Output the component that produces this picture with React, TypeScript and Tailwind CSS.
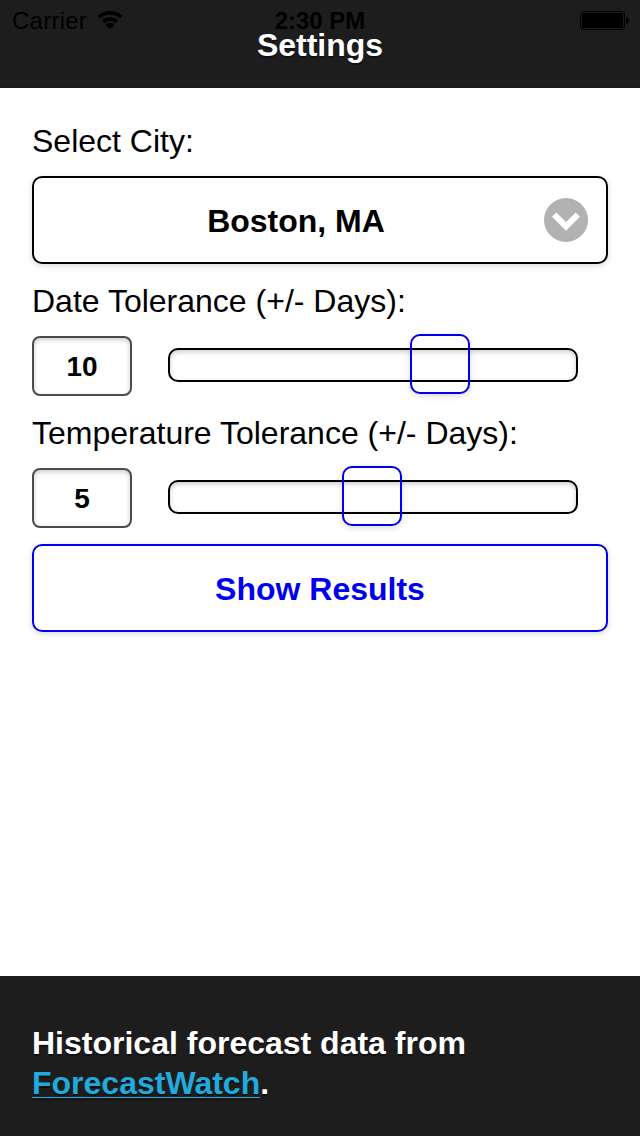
import React from "react";

function StatusBar() {
  return (
    <div className="absolute inset-x-0 top-0 flex h-10 justify-between text-[24px] leading-[40px] text-black">
      <div className="flex w-[213px] pl-3">
        <span className="pt-px tracking-[0.25px]">Carrier</span>
        <svg className="ml-[10px] mt-[10px]" width="26" height="20" viewBox="0 0 26 20">
          <g fill="none" stroke="#000" strokeWidth="3.6">
            <path d="M1.8 7.3A16 16 0 0 1 24.2 7.3" />
            <path d="M6.2 11.9A9.7 9.7 0 0 1 19.8 11.9" />
          </g>
          <path d="M13 19.3L8.4 14.8A6.4 6.4 0 0 1 17.6 14.8Z" />
        </svg>
      </div>
      <div className="w-[213px] pt-px text-center font-bold">2:30 PM</div>
      <div className="flex w-[213px] justify-end pr-[11px] pt-[11px]">
        <svg width="49" height="19" viewBox="0 0 49 19">
          <rect x="0.5" y="0.5" width="44" height="18" rx="3" fill="none" stroke="#000" />
          <rect x="2" y="2" width="41" height="15" rx="1.5" />
          <path d="M46 6c4 1 4 6 0 7Z" />
        </svg>
      </div>
    </div>
  );
}

function ToleranceRow({ value, offset }: { value: number; offset: number }) {
  return (
    <div className="flex h-[60px] items-start">
      <input
        readOnly
        value={value}
        className="h-[60px] w-[100px] rounded-[8px] border-2 border-[#4b4b4b] bg-white pt-[2px] text-center text-[28px] font-bold text-black shadow-[inset_0_2px_5px_rgba(0,0,0,0.2)] outline-none"
      />
      <div className="relative ml-9 mt-3 h-[34px] w-[410px] rounded-[10px] border-2 border-black shadow-[inset_0_2px_5px_rgba(0,0,0,0.2)]">
        <div
          className="absolute top-[-16px] h-[60px] w-[60px] rounded-[10px] border-2 border-[#0000ee] shadow-[0_2px_6px_rgba(0,0,0,0.15)]"
          style={{ left: offset }}
        />
      </div>
    </div>
  );
}

export default function App() {
  return (
    <div className="flex h-[1136px] w-[640px] flex-col bg-white font-['Liberation_Sans',Arial,sans-serif] text-[32px] leading-[40px] text-black">
      <header className="relative h-[88px] border-b-2 border-[#1b1b1b] bg-[#1d1d1d] pt-[25px]">
        <StatusBar />
        <h1 className="relative text-center font-bold text-white [text-shadow:0_2px_0_#111]">Settings</h1>
      </header>
      <main className="flex flex-1 flex-col px-8 pt-[33px]">
        <p>Select City:</p>
        <button className="mt-[15px] flex h-[88px] items-center rounded-[10px] border-2 border-black pl-[14px] pr-[18px] shadow-[0_2px_6px_rgba(0,0,0,0.15)]">
          <span className="flex-1 pt-[2px] text-center font-bold">Boston, MA</span>
          <svg width="44" height="44" viewBox="0 0 44 44">
            <circle cx="22" cy="22" r="22" fill="#b2b2b2" />
            <path d="M10.2 16.6L22 28.4L33.8 16.6" fill="none" stroke="#fff" strokeWidth="6.2" />
          </svg>
        </button>
        <p className="mt-[17px]">Date Tolerance (+/- Days):</p>
        <div className="mt-[15px]">
          <ToleranceRow value={10} offset={240} />
        </div>
        <p className="mt-[17px]">Temperature Tolerance (+/- Days):</p>
        <div className="mt-[15px]">
          <ToleranceRow value={5} offset={172} />
        </div>
        <button className="mt-4 h-[88px] rounded-[10px] border-2 border-[#0000ee] pt-[2px] font-bold text-[#0000ee] shadow-[0_2px_6px_rgba(0,0,0,0.15)]">
          Show Results
        </button>
      </main>
      <footer className="h-[160px] bg-[#1d1d1d] px-8 pt-[47px] font-bold text-white [text-shadow:0_2px_0_#111]">
        Historical forecast data from
        <br />
        <a className="text-[#22aadd] underline decoration-1 underline-offset-[3px] [text-decoration-skip-ink:none]">
          ForecastWatch
        </a>
        .
      </footer>
    </div>
  );
}
